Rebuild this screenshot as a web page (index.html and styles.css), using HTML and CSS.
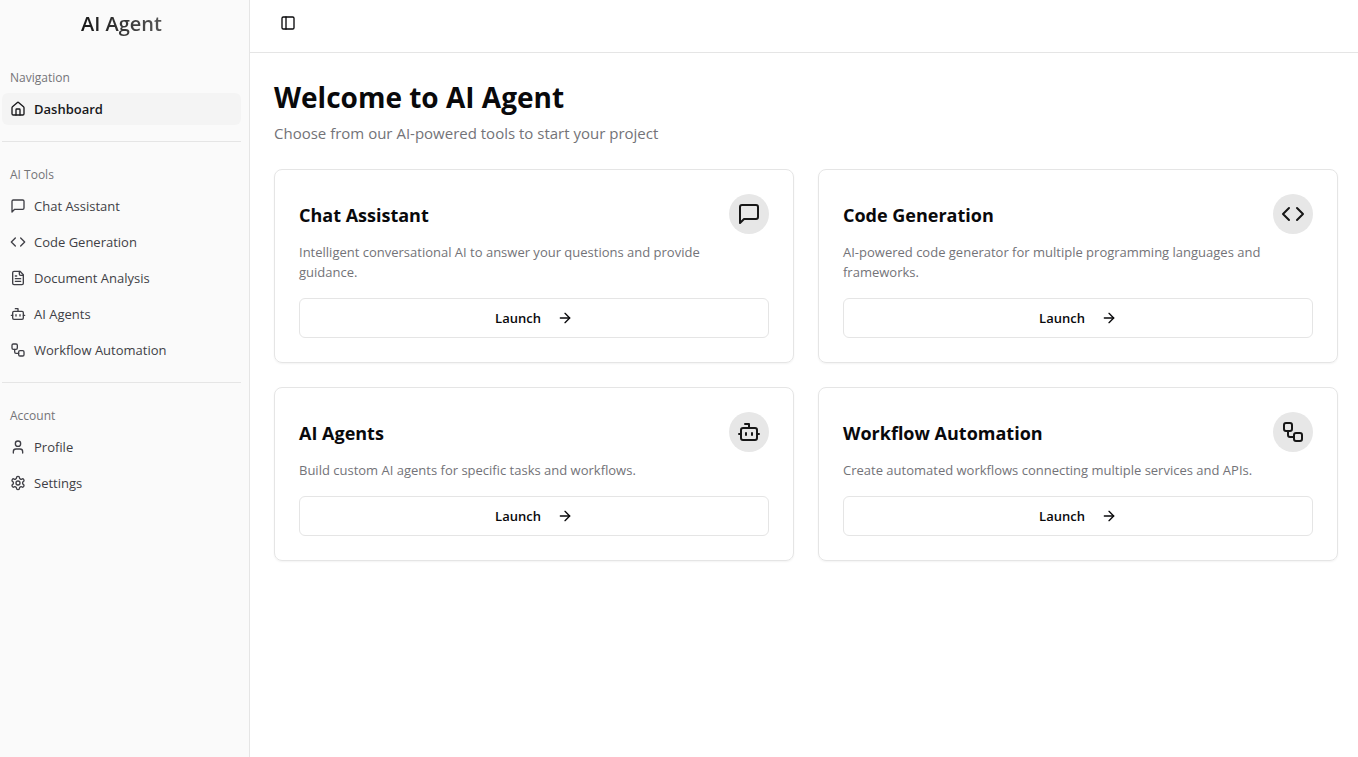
FILE: index.html
```html
<!DOCTYPE html>
<html lang="en">
<head>
<meta charset="utf-8">
<meta name="viewport" content="width=device-width, initial-scale=1">
<title>AI Agent</title>
<link rel="stylesheet" href="styles.css">
</head>
<body>
<svg class="sprite" aria-hidden="true">
  <symbol id="panel" viewBox="0 0 24 24"><rect width="18" height="18" x="3" y="3" rx="2"/><path d="M9 3v18"/></symbol>
  <symbol id="home" viewBox="0 0 24 24"><path d="M15 21v-8a1 1 0 0 0-1-1h-4a1 1 0 0 0-1 1v8"/><path d="M3 10a2 2 0 0 1 .709-1.528l7-5.999a2 2 0 0 1 2.582 0l7 5.999A2 2 0 0 1 21 10v9a2 2 0 0 1-2 2H5a2 2 0 0 1-2-2z"/></symbol>
  <symbol id="chat" viewBox="0 0 24 24"><path d="M21 15a2 2 0 0 1-2 2H7l-4 4V5a2 2 0 0 1 2-2h14a2 2 0 0 1 2 2z"/></symbol>
  <symbol id="code" viewBox="0 0 24 24"><path d="m16 18 6-6-6-6"/><path d="m8 6-6 6 6 6"/></symbol>
  <symbol id="doc" viewBox="0 0 24 24"><path d="M15 2H6a2 2 0 0 0-2 2v16a2 2 0 0 0 2 2h12a2 2 0 0 0 2-2V7Z"/><path d="M14 2v4a2 2 0 0 0 2 2h4"/><path d="M10 9H8"/><path d="M16 13H8"/><path d="M16 17H8"/></symbol>
  <symbol id="bot" viewBox="0 0 24 24"><path d="M12 8V4H8"/><rect width="16" height="12" x="4" y="8" rx="2"/><path d="M2 14h2"/><path d="M20 14h2"/><path d="M15 13v2"/><path d="M9 13v2"/></symbol>
  <symbol id="flow" viewBox="0 0 24 24"><rect width="8" height="8" x="3" y="3" rx="2"/><path d="M7 11v4a2 2 0 0 0 2 2h4"/><rect width="8" height="8" x="13" y="13" rx="2"/></symbol>
  <symbol id="user" viewBox="0 0 24 24"><path d="M19 21v-2a4 4 0 0 0-4-4H9a4 4 0 0 0-4 4v2"/><circle cx="12" cy="7" r="4"/></symbol>
  <symbol id="gear" viewBox="0 0 24 24"><path d="M12.22 2h-.44a2 2 0 0 0-2 2v.18a2 2 0 0 1-1 1.73l-.43.25a2 2 0 0 1-2 0l-.15-.08a2 2 0 0 0-2.73.73l-.22.38a2 2 0 0 0 .73 2.73l.15.1a2 2 0 0 1 1 1.72v.51a2 2 0 0 1-1 1.74l-.15.09a2 2 0 0 0-.73 2.73l.22.38a2 2 0 0 0 2.73.73l.15-.08a2 2 0 0 1 2 0l.43.25a2 2 0 0 1 1 1.73V20a2 2 0 0 0 2 2h.44a2 2 0 0 0 2-2v-.18a2 2 0 0 1 1-1.73l.43-.25a2 2 0 0 1 2 0l.15.08a2 2 0 0 0 2.73-.73l.22-.39a2 2 0 0 0-.73-2.73l-.15-.08a2 2 0 0 1-1-1.74v-.5a2 2 0 0 1 1-1.74l.15-.09a2 2 0 0 0 .73-2.73l-.22-.38a2 2 0 0 0-2.73-.73l-.15.08a2 2 0 0 1-2 0l-.43-.25a2 2 0 0 1-1-1.73V4a2 2 0 0 0-2-2z"/><circle cx="12" cy="12" r="3"/></symbol>
  <symbol id="arrow" viewBox="0 0 24 24"><path d="M5 12h14"/><path d="m12 5 7 7-7 7"/></symbol>
</svg>
<div class="layout">
  <aside class="sidebar">
    <div class="brand"><span class="brand-name">AI Agent</span></div>
    <nav class="nav">
      <section class="group">
        <h2 class="group-label">Navigation</h2>
        <ul class="menu">
          <li><a class="item active" href="#"><svg class="icon"><use href="#home"/></svg>Dashboard</a></li>
        </ul>
      </section>
      <section class="group">
        <h2 class="group-label">AI Tools</h2>
        <ul class="menu">
          <li><a class="item" href="#"><svg class="icon"><use href="#chat"/></svg>Chat Assistant</a></li>
          <li><a class="item" href="#"><svg class="icon"><use href="#code"/></svg>Code Generation</a></li>
          <li><a class="item" href="#"><svg class="icon"><use href="#doc"/></svg>Document Analysis</a></li>
          <li><a class="item" href="#"><svg class="icon"><use href="#bot"/></svg>AI Agents</a></li>
          <li><a class="item" href="#"><svg class="icon"><use href="#flow"/></svg>Workflow Automation</a></li>
        </ul>
      </section>
      <section class="group">
        <h2 class="group-label">Account</h2>
        <ul class="menu">
          <li><a class="item" href="#"><svg class="icon"><use href="#user"/></svg>Profile</a></li>
          <li><a class="item" href="#"><svg class="icon"><use href="#gear"/></svg>Settings</a></li>
        </ul>
      </section>
    </nav>
  </aside>
  <div class="page">
    <header class="topbar">
      <button class="toggle" type="button" aria-label="Toggle sidebar"><svg class="icon"><use href="#panel"/></svg></button>
    </header>
    <main class="content">
      <h1 class="title">Welcome to AI Agent</h1>
      <p class="subtitle">Choose from our AI-powered tools to start your project</p>
      <div class="cards">
        <article class="card">
          <div class="card-head"><h3 class="card-title">Chat Assistant</h3><span class="badge"><svg class="icon-lg"><use href="#chat"/></svg></span></div>
          <p class="card-text">Intelligent conversational AI to answer your questions and provide guidance.</p>
          <button class="launch" type="button">Launch<svg class="icon"><use href="#arrow"/></svg></button>
        </article>
        <article class="card">
          <div class="card-head"><h3 class="card-title">Code Generation</h3><span class="badge"><svg class="icon-lg"><use href="#code"/></svg></span></div>
          <p class="card-text">AI-powered code generator for multiple programming languages and frameworks.</p>
          <button class="launch" type="button">Launch<svg class="icon"><use href="#arrow"/></svg></button>
        </article>
        <article class="card">
          <div class="card-head"><h3 class="card-title">AI Agents</h3><span class="badge"><svg class="icon-lg"><use href="#bot"/></svg></span></div>
          <p class="card-text">Build custom AI agents for specific tasks and workflows.</p>
          <button class="launch" type="button">Launch<svg class="icon"><use href="#arrow"/></svg></button>
        </article>
        <article class="card">
          <div class="card-head"><h3 class="card-title">Workflow Automation</h3><span class="badge"><svg class="icon-lg"><use href="#flow"/></svg></span></div>
          <p class="card-text">Create automated workflows connecting multiple services and APIs.</p>
          <button class="launch" type="button">Launch<svg class="icon"><use href="#arrow"/></svg></button>
        </article>
      </div>
    </main>
  </div>
</div>
</body>
</html>
```
FILE: styles.css
```css
*, *::before, *::after { box-sizing: border-box; }
body, h1, h2, h3, p, ul { margin: 0; padding: 0; }
body {
  font-family: "Segoe UI", "Open Sans", "Noto Sans", sans-serif;
  font-size: 13px;
  line-height: 20px;
  color: #09090b;
  background: #fff;
}
button { font: inherit; color: inherit; background: none; border: 0; padding: 0; cursor: pointer; }
ul { list-style: none; }
svg { fill: none; stroke: currentColor; stroke-width: 2; stroke-linecap: round; stroke-linejoin: round; flex: none; }
.sprite { display: none; }
.icon { width: 16px; height: 16px; }
.icon-lg { width: 24px; height: 24px; }

.layout { display: flex; min-height: 100vh; }
.sidebar {
  flex: 0 0 250px;
  padding: 0 8px 0 2px;
  background: #fafafa;
  border-right: 1px solid #e5e5e5;
}
.brand { display: flex; justify-content: center; padding: 10px 0 23px; }
.brand-name {
  font-size: 20px;
  line-height: 28px;
  font-weight: 600;
  color: transparent;
  background: linear-gradient(to right, #171717, #555);
  -webkit-background-clip: text;
  background-clip: text;
}
.group + .group { margin-top: 16px; padding-top: 16px; border-top: 1px solid #e5e5e5; }
.group-label { padding: 2px 8px 0; font-size: 12px; line-height: 30px; font-weight: 500; color: #747478; }
.menu { display: grid; gap: 4px; }
.item {
  display: flex;
  align-items: center;
  gap: 8px;
  height: 32px;
  padding: 0 8px;
  border-radius: 6px;
  color: #3f3f46;
  text-decoration: none;
}
.item.active { background: #f4f4f4; color: #18181b; font-weight: 600; }

.page { flex: 1; min-width: 0; }
.topbar { display: flex; align-items: center; height: 53px; padding: 0 24px 7px; border-bottom: 1px solid #e5e5e5; }
.toggle { display: grid; place-items: center; width: 28px; height: 28px; }
.content { padding: 24px 20px 24px 24px; }
.title { font-size: 28px; line-height: 40px; font-weight: 700; }
.subtitle { margin-top: 4px; font-size: 15px; line-height: 24px; color: #737378; }
.cards { display: grid; grid-template-columns: 1fr 1fr; gap: 24px; margin-top: 24px; }
.card {
  padding: 24px;
  border: 1px solid #e5e5e5;
  border-radius: 8px;
  box-shadow: 0 1px 2px rgba(0, 0, 0, 0.05);
}
.card-head { display: flex; align-items: center; justify-content: space-between; }
.card-title { padding-top: 2px; font-size: 18px; line-height: 28px; font-weight: 700; }
.badge { display: grid; place-items: center; width: 40px; height: 40px; border-radius: 50%; background: #e7e7e7; color: #171717; }
.card-text { margin-top: 8px; padding-right: 24px; color: #737378; }
.launch {
  display: flex;
  align-items: center;
  justify-content: center;
  gap: 16px;
  width: 100%;
  height: 40px;
  margin-top: 16px;
  border: 1px solid #e5e5e5;
  border-radius: 6px;
  font-weight: 600;
}
@media (max-width: 800px) { .cards { grid-template-columns: 1fr; } }
```
